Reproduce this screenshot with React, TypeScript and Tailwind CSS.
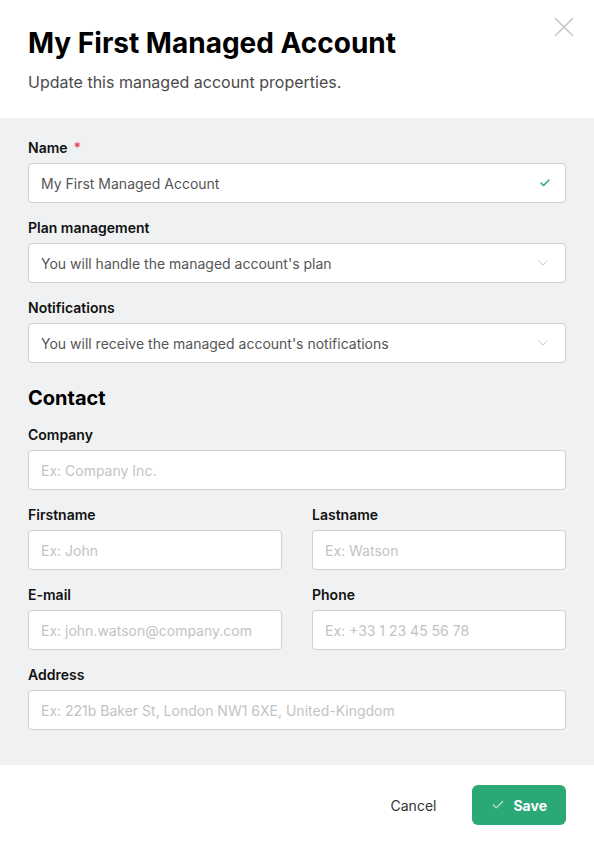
import React from 'react';
import { X, Check, ChevronDown } from 'lucide-react';

const Label = ({ children, required }: { children: React.ReactNode; required?: boolean }) => (
  <label className="block mb-[5px] text-[14px] leading-5 font-semibold text-[#111]">
    {children}
    {required && <span className="ml-[6px] text-[#e8445a]">*</span>}
  </label>
);

const TextField = ({ label, placeholder, value, required }: { label: string; placeholder?: string; value?: string; required?: boolean }) => (
  <div>
    <Label required={required}>{label}</Label>
    <div className="relative">
      <input
        readOnly
        value={value ?? ''}
        placeholder={placeholder}
        className="w-full h-[40px] rounded-[4px] border border-[#cfd0d2] bg-white px-3 text-[14px] text-[#555] placeholder:text-[#c2c3c5] outline-none"
      />
      {value && (
        <Check className="absolute right-[15px] top-[14px] h-3 w-3 text-[#2aa876]" strokeWidth={3} />
      )}
    </div>
  </div>
);

const SelectField = ({ label, value }: { label: string; value: string }) => (
  <div>
    <Label>{label}</Label>
    <div className="flex items-center justify-between h-[40px] rounded-[4px] border border-[#cfd0d2] bg-white px-3 text-[14px] text-[#555]">
      <span>{value}</span>
      <ChevronDown className="h-4 w-4 text-[#c4c5c7] mr-[2px]" strokeWidth={1.5} />
    </div>
  </div>
);

export default function App() {
  return (
    <div className="w-[594px] min-h-[847px] bg-white font-['Inter',sans-serif] flex flex-col">
      {/* Header */}
      <div className="relative px-7 pt-[26px] pb-[24px]">
        <h1 className="text-[28px] leading-[34px] font-bold text-black">My First Managed Account</h1>
        <p className="mt-[10px] text-[16px] leading-6 text-[#4a4a4a]">Update this managed account properties.</p>
        <button className="absolute right-[13px] top-[10px] text-[#c5c6c8]">
          <X className="h-[34px] w-[34px]" strokeWidth={1.1} />
        </button>
      </div>

      {/* Body */}
      <div className="bg-[#f0f1f3] px-7 pt-5 pb-[35px] flex flex-col gap-[15px]">
        <TextField label="Name" value="My First Managed Account" required />
        <SelectField label="Plan management" value="You will handle the managed account's plan" />
        <SelectField label="Notifications" value="You will receive the managed account's notifications" />

        <h2 className="mt-[6px] -mb-[2px] text-[20px] leading-7 font-bold text-black">Contact</h2>

        <TextField label="Company" placeholder="Ex: Company Inc." />
        <div className="grid grid-cols-2 gap-x-[30px]">
          <TextField label="Firstname" placeholder="Ex: John" />
          <TextField label="Lastname" placeholder="Ex: Watson" />
        </div>
        <div className="grid grid-cols-2 gap-x-[30px]">
          <TextField label="E-mail" placeholder="Ex: john.watson@company.com" />
          <TextField label="Phone" placeholder="Ex: +33 1 23 45 56 78" />
        </div>
        <TextField label="Address" placeholder="Ex: 221b Baker St, London NW1 6XE, United-Kingdom" />
      </div>

      {/* Footer */}
      <div className="flex items-center justify-end gap-9 px-7 pt-5 pb-[22px]">
        <button className="text-[14px] text-[#333]">Cancel</button>
        <button className="flex items-center gap-2 h-[40px] px-[19px] rounded-md bg-[#2aa876] text-white text-[14px] font-bold">
          <Check className="h-[14px] w-[14px] text-white/70" strokeWidth={2} />
          Save
        </button>
      </div>
    </div>
  );
}
